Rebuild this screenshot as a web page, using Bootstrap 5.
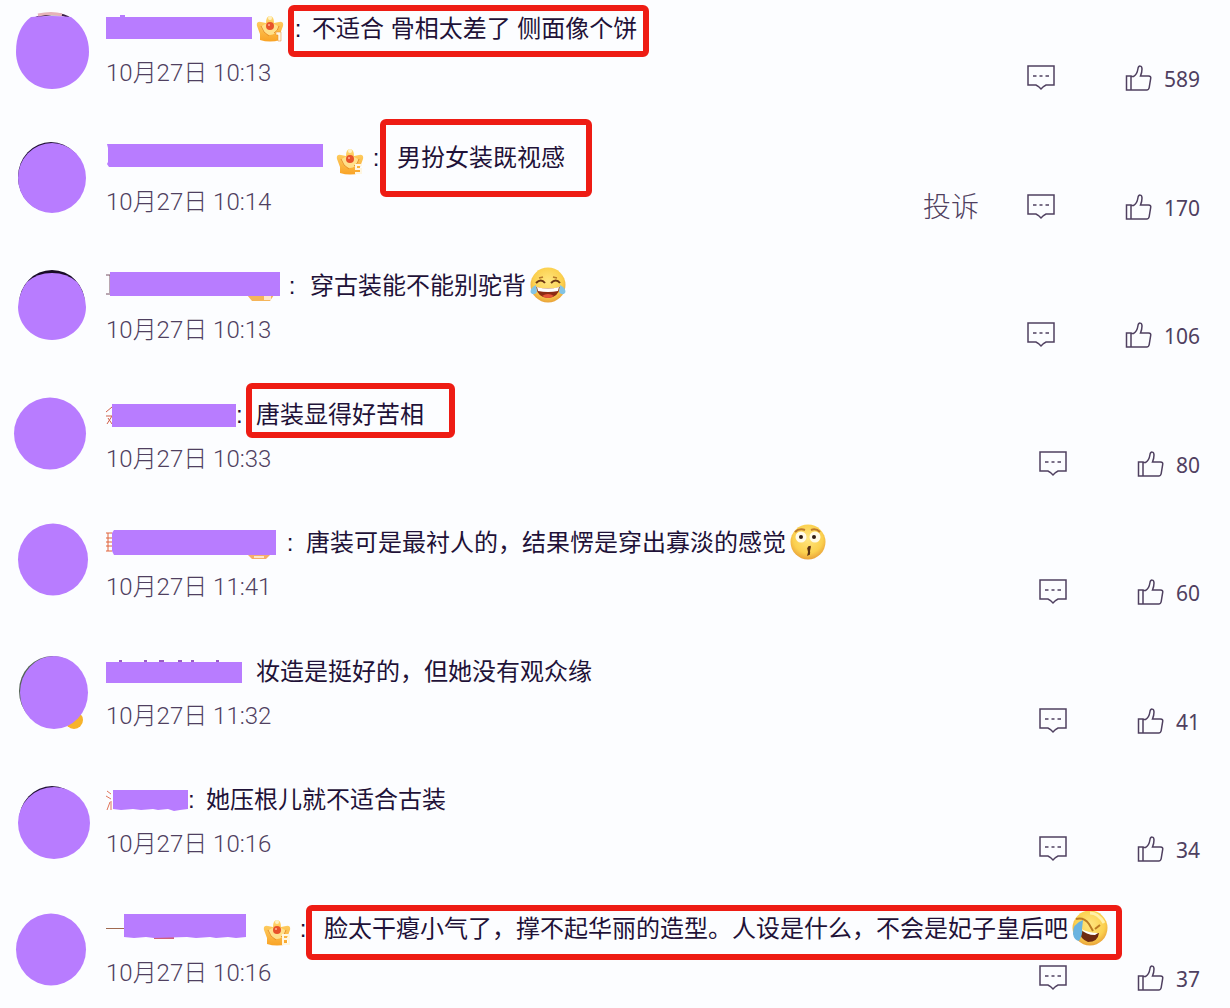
<!DOCTYPE html>
<html lang="zh-CN">
<head>
<meta charset="utf-8">
<meta name="viewport" content="width=device-width, initial-scale=1">
<title>评论</title>
<link href="https://cdn.jsdelivr.net/npm/bootstrap@5.3.0/dist/css/bootstrap.min.css" rel="stylesheet">
<style>
:root { --veil: #b87cff; --ink: #1f1238; --soft: #4f4060; --mark: #ee1c14; }
body { background: #fcfdff; color: var(--ink); font-family: "Liberation Sans", "Noto Sans CJK SC", sans-serif; }
.comment { padding-bottom: 37px; padding-right: 30px; }
.comment:nth-child(even) { padding-bottom: 36px; }
.comment:last-child { padding-bottom: 0; }
.avatar { width: 106px; height: 92px; fill: var(--veil); }
.comment-body { padding-top: 10px; min-width: 0; }
.line { min-height: 38px; margin-bottom: 11px; font-size: 24px; line-height: 38px; }
.veil { height: 36px; fill: var(--veil); overflow: visible; }
.crown { width: 28px; height: 28px; }
.face { width: 36px; height: 36px; }
.stamp { font-family: Roboto, "Noto Sans CJK SC", sans-serif; font-weight: 300; font-size: 24px; line-height: 28px; color: var(--soft); }
.tools { color: var(--soft); height: 28px; margin-top: 5px; }
.tools .btn { color: inherit; line-height: 30px; border: 0; }
.report { font-size: 28px; font-weight: 300; margin-right: 48px; }
.reply { margin-right: 70px; }
.like { font-family: "Noto Sans", sans-serif; font-size: 21px; gap: 12px; }
.tools svg { width: 28px; height: 28px; fill: none; stroke: currentColor; stroke-width: 1.5; }
.like svg { width: 27px; }
.marked { position: relative; }
.marked::before { content: ""; position: absolute; border: 6px solid var(--mark); border-radius: 6px; pointer-events: none; }
.mark-a::before { inset: -5px -12px -9px -24px; }
.mark-b::before { inset: -20px -27px -20px -17px; }
.mark-c::before { inset: -13px -31px -4px -10px; }
.mark-d::before { inset: -5px -14px -12px -18px; }
.sp-1 { margin-left: 4px; } .sp-2 { margin-left: 8px; } .sp-3 { margin-left: 10px; } .sp-4 { margin-left: 12px; } .sp-5 { margin-left: 14px; } .sp-6 { margin-left: 17px; }
.colon { width: 8px; }
</style>
</head>
<body>
<svg width="0" height="0" class="position-absolute" aria-hidden="true">
  <defs>
    <linearGradient id="gold" x1="0" y1="0" x2="0" y2="1"><stop offset="0" stop-color="#ffd870"/><stop offset="1" stop-color="#f9a326"/></linearGradient>
    <radialGradient id="skin" cx=".5" cy=".4" r=".6"><stop offset="0" stop-color="#ffe680"/><stop offset=".7" stop-color="#fbd04e"/><stop offset="1" stop-color="#e9a23a"/></radialGradient>
  </defs>
  <symbol id="i-crown" viewBox="0 0 28 28"><path d="M4 20L1 12q-1-5 4-4l5 1q0-7 4-7t4 7l5-1q5-1 4 4l-3 8v6q-10 3-20 0z" fill="url(#gold)"/><circle cx="14" cy="4" r="2" fill="#fff1c4"/><path d="M5 13q8-8 18 0-3 8-9 8t-9-8z" fill="#ffe08a"/><path d="M5 12q2 7 8 10M23 12q-1 5-5 7" fill="none" stroke="#e8912a"/><circle cx="14" cy="12" r="4" fill="#e8522a"/><circle cx="13" cy="11" r="1" fill="#ffb095"/></symbol>
  <symbol id="i-reply" viewBox="0 0 28 28"><path d="M1 2h26v19h-8l-2.500 1.500-2.500 2.500-2.500-2.500L9 21H1z"/><path d="M6 12h3.500M12.500 12h3M18.500 12H22"/></symbol>
  <symbol id="i-like" viewBox="0 0 27 28"><path d="M1.500 12H6v14H1.500zM6 12.500h2.500c3-1.500 4-4.500 4.500-8 .4-3.500 4-3 4 .5 0 2-.5 4.500-1.500 7h8c2 0 2.500 1 2.200 2.500l-1.500 9c-.3 2-1 2.500-2.500 2.500H6"/></symbol>
</svg>

<main class="container-fluid p-0">
<article class="comment d-flex">
  <svg class="avatar flex-shrink-0" viewBox="0 0 106 92"><path d="M24 27q10-12 29-13 12 0 18 5" fill="none" stroke="#3a2146" stroke-width="2"/><path d="M38 15q14-3 24 0" fill="none" stroke="#e6b3b8" stroke-width="3"/><path d="M31 17q22-2 40 0 18 13 18 35c0 20-16 37-37 37S16 72 16 52q0-24 15-35z"/></svg>
  <div class="comment-body flex-grow-1">
    <div class="line d-flex">
      <svg class="veil flex-shrink-0" width="146" height="36"><path d="M14 5h5v3h-5z"/><path d="M0 7h146v22H0z"/></svg>
      <svg class="crown flex-shrink-0 sp-1 mt-1" viewBox="0 0 28 28"><use href="#i-crown"/><path d="M20 18h5v9h-3v-6h-2z" fill="#fff6e0" stroke="#e58a25" stroke-width=".5"/></svg>
      <span class="colon sp-3 text-center">:</span>
      <span class="marked mark-a sp-3">不适合 骨相太差了 侧面像个饼</span>
    </div>
    <div class="d-flex justify-content-between"><time class="stamp">10月27日 10:13</time>
      <div class="tools d-flex"><button class="btn p-0 d-flex reply" aria-label="回复"><svg><use href="#i-reply"/></svg></button><button class="btn p-0 d-flex like"><svg><use href="#i-like"/></svg>589</button></div></div>
  </div>
</article>

<article class="comment d-flex">
  <svg class="avatar flex-shrink-0" viewBox="0 0 106 92"><ellipse cx="51" cy="48" rx="33" ry="35" fill="#211237"/><ellipse cx="52" cy="49" rx="34" ry="35"/></svg>
  <div class="comment-body flex-grow-1">
    <div class="line d-flex">
      <svg class="veil flex-shrink-0" width="218" height="36"><path d="M1 5h216v23H3l-2-3 1-2V9z"/></svg>
      <svg class="crown flex-shrink-0 sp-4 mt-2" viewBox="0 0 28 28"><use href="#i-crown"/><path d="M26 18h-6v4h5v4h-6" fill="none" stroke="#fff6e0" stroke-width="2"/></svg>
      <span class="colon sp-2 text-center">:</span>
      <span class="marked mark-b sp-6">男扮女装既视感</span>
    </div>
    <div class="d-flex justify-content-between"><time class="stamp">10月27日 10:14</time>
      <div class="tools d-flex"><button class="btn p-0 report">投诉</button><button class="btn p-0 d-flex reply" aria-label="回复"><svg><use href="#i-reply"/></svg></button><button class="btn p-0 d-flex like"><svg><use href="#i-like"/></svg>170</button></div></div>
  </div>
</article>

<article class="comment d-flex">
  <svg class="avatar flex-shrink-0" viewBox="0 0 106 92"><ellipse cx="52" cy="47" rx="33" ry="34" fill="#180b26"/><path d="M18 50q1-15 9-25 10-9 25-9t25 9q8 10 9 25c0 18-15 33-34 33S18 68 18 50z"/></svg>
  <div class="comment-body flex-grow-1">
    <div class="line d-flex">
      <svg class="veil flex-shrink-0" width="174" height="36"><path d="M0 8h5M4 8v18M0 27h5" stroke="#765065"/><path d="M141 28h27l-4 6h-18z" fill="#f5b55a"/><path d="M158 29h7v4h-7z" fill="#ffe7c7"/><path d="M4 5h170v24H4z"/></svg>
      <span class="colon sp-2 text-center">:</span>
      <span class="d-flex sp-5"><span>穿古装能不能别驼背</span>
      <svg class="face flex-shrink-0 sp-1" viewBox="0 0 36 36"><circle cx="18" cy="18" r="17.500" fill="url(#skin)"/><path d="M6 16q5-5 9 0M21 16q5-5 9 0" fill="none" stroke="#6d3713" stroke-width="2"/><path d="M9 11l4-1M23 10l4 1" stroke="#b77a2a" stroke-width="1.500"/><path d="M6 20q12 3 24 0-2 11-12 11T6 20z" fill="#8c2b13"/><path d="M7 20q11 3 22 0l-1 4q-10 2-20 0z" fill="#fff"/><path d="M12 29q6-4 12 0-6 4-12 0z" fill="#e55438"/><path d="M6 18q-7 4-5 8 3 3 6-1zM30 18q7 4 5 8-3 3-6-1z" fill="#83c4e5"/></svg></span>
    </div>
    <div class="d-flex justify-content-between"><time class="stamp">10月27日 10:13</time>
      <div class="tools d-flex"><button class="btn p-0 d-flex reply" aria-label="回复"><svg><use href="#i-reply"/></svg></button><button class="btn p-0 d-flex like"><svg><use href="#i-like"/></svg>106</button></div></div>
  </div>
</article>

<article class="comment d-flex">
  <svg class="avatar flex-shrink-0" viewBox="0 0 106 92"><ellipse cx="50" cy="47.500" rx="36" ry="36"/></svg>
  <div class="comment-body flex-grow-1">
    <div class="line d-flex">
      <svg class="veil flex-shrink-0" width="130" height="36"><path d="M0 16l6-5M0 20h6M1 28l5-8M2 22l4 6" stroke="#d0604a"/><path d="M6 8h124v23H6z"/></svg>
      <span class="colon">:</span>
      <span class="marked mark-c sp-4">唐装显得好苦相</span>
    </div>
    <div class="d-flex justify-content-between"><time class="stamp">10月27日 10:33</time>
      <div class="tools d-flex"><button class="btn p-0 d-flex reply" aria-label="回复"><svg><use href="#i-reply"/></svg></button><button class="btn p-0 d-flex like"><svg><use href="#i-like"/></svg>80</button></div></div>
  </div>
</article>

<article class="comment d-flex">
  <svg class="avatar flex-shrink-0" viewBox="0 0 106 92"><ellipse cx="53" cy="45.500" rx="35" ry="36"/></svg>
  <div class="comment-body flex-grow-1">
    <div class="line d-flex">
      <svg class="veil flex-shrink-0" width="170" height="36"><path d="M0 9h6M0 14h6M0 18h6M0 22h6M0 27h6M2 9v18" stroke="#e0643c"/><path d="M142 31h22l-4 4h-14z" fill="#f5ae6a"/><path d="M148 32h10v2h-10z" fill="#ffe7c7"/><path d="M8 6h162v25H8l-2-4V9z"/></svg>
      <span class="colon sp-3 text-center">:</span>
      <span class="d-flex sp-4"><span>唐装可是最衬人的，结果愣是穿出寡淡的感觉</span>
      <svg class="face flex-shrink-0 sp-1" viewBox="0 0 36 36"><circle cx="18" cy="18" r="17.500" fill="url(#skin)"/><circle cx="11" cy="13" r="5.500" fill="#fffbe8"/><circle cx="25" cy="13" r="5.500" fill="#fffbe8"/><circle cx="11" cy="13" r="2" fill="#2e1a12"/><circle cx="24" cy="13" r="2" fill="#2e1a12"/><path d="M5 8q4-4 10-2M21 6q5-2 9 2" fill="none" stroke="#bd7a2b" stroke-width="2"/><path d="M17 24q4-4 4-1l-1 4q1 4-3 5l1-4z" fill="#754018"/><path d="M19 22v9" stroke="#372012"/></svg></span>
    </div>
    <div class="d-flex justify-content-between"><time class="stamp">10月27日 11:41</time>
      <div class="tools d-flex"><button class="btn p-0 d-flex reply" aria-label="回复"><svg><use href="#i-reply"/></svg></button><button class="btn p-0 d-flex like"><svg><use href="#i-like"/></svg>60</button></div></div>
  </div>
</article>

<article class="comment d-flex">
  <svg class="avatar flex-shrink-0" viewBox="0 0 106 92"><circle cx="74" cy="77" r="9" fill="#f7b32b"/><ellipse cx="52.500" cy="48" rx="33.500" ry="35" fill="#536456"/><ellipse cx="54" cy="49.500" rx="34" ry="36.500"/></svg>
  <div class="comment-body flex-grow-1">
    <div class="line d-flex">
      <svg class="veil flex-shrink-0" width="136" height="36"><path d="M13 8h3M38 8h3M53 8h5M72 8h4M85 8h3M110 8h3" stroke="#9a5cc5" stroke-width="2"/><path d="M0 9h136v21H0z"/></svg>
      <span class="sp-5">妆造是挺好的，但她没有观众缘</span>
    </div>
    <div class="d-flex justify-content-between"><time class="stamp">10月27日 11:32</time>
      <div class="tools d-flex"><button class="btn p-0 d-flex reply" aria-label="回复"><svg><use href="#i-reply"/></svg></button><button class="btn p-0 d-flex like"><svg><use href="#i-like"/></svg>41</button></div></div>
  </div>
</article>

<article class="comment d-flex">
  <svg class="avatar flex-shrink-0" viewBox="0 0 106 92"><ellipse cx="52" cy="50" rx="33" ry="35" fill="#211237"/><ellipse cx="54" cy="52" rx="36" ry="36"/></svg>
  <div class="comment-body flex-grow-1">
    <div class="line d-flex">
      <svg class="veil flex-shrink-0" width="82" height="36"><path d="M1 10l4 3M0 15l5 3M1 29l3-8M5 20v9" stroke="#e0745a"/><path d="M7 9h75v19l-8 1-6 1-6-2-10 1-5-1-12 1-8-1-12 1-8-1z"/></svg>
      <span class="colon">:</span>
      <span class="sp-3">她压根儿就不适合古装</span>
    </div>
    <div class="d-flex justify-content-between"><time class="stamp">10月27日 10:16</time>
      <div class="tools d-flex"><button class="btn p-0 d-flex reply" aria-label="回复"><svg><use href="#i-reply"/></svg></button><button class="btn p-0 d-flex like"><svg><use href="#i-like"/></svg>34</button></div></div>
  </div>
</article>

<article class="comment d-flex">
  <svg class="avatar flex-shrink-0" viewBox="0 0 106 92"><ellipse cx="51" cy="49.500" rx="35" ry="36"/></svg>
  <div class="comment-body flex-grow-1">
    <div class="line d-flex">
      <svg class="veil flex-shrink-0" width="140" height="36"><path d="M0 18.500h18" stroke="#a06a50"/><path d="M48 28h20" stroke="#d0607a" stroke-width="2"/><path d="M18 4h122v23l-10 1-8-1-12 1-6-1-14 1-9-1-33 1-8-1-12 1-10-1z"/></svg>
      <svg class="crown flex-shrink-0 sp-6 mt-2" viewBox="0 0 28 28"><use href="#i-crown"/><path d="M20 17h6v9h-6zM20 21h6" fill="none" stroke="#fff6e0" stroke-width="2"/></svg>
      <span class="colon sp-2 text-center">:</span>
      <span class="marked mark-d d-flex sp-6"><span>脸太干瘪小气了，撑不起华丽的造型。人设是什么，不会是妃子皇后吧</span>
      <svg class="face flex-shrink-0 sp-1" viewBox="0 0 36 36"><circle cx="18" cy="18" r="17.500" fill="url(#skin)"/><path d="M18 3q8 0 14 10" fill="none" stroke="#fff0a8" stroke-width="3"/><path d="M7 20q11 4 20 3-1 9-11 9Q8 29 7 20z" fill="#6e2a12"/><path d="M9 19q8 4 17 4l-3 2q-9 0-14-6z" fill="#fff"/><path d="M4 9q8-2 13 5l4 7" fill="none" stroke="#bb7b22" stroke-width="2"/><path d="M11 10q-11 4-10 14 1 6 6 7 4-7 3-12z" fill="#69b3e0"/><path d="M23 19l5-4" stroke="#bb7b22" stroke-width="2"/></svg></span>
    </div>
    <div class="d-flex justify-content-between"><time class="stamp">10月27日 10:16</time>
      <div class="tools d-flex"><button class="btn p-0 d-flex reply" aria-label="回复"><svg><use href="#i-reply"/></svg></button><button class="btn p-0 d-flex like"><svg><use href="#i-like"/></svg>37</button></div></div>
  </div>
</article>
</main>
<script src="https://cdn.jsdelivr.net/npm/bootstrap@5.3.0/dist/js/bootstrap.bundle.min.js"></script>
</body>
</html>
